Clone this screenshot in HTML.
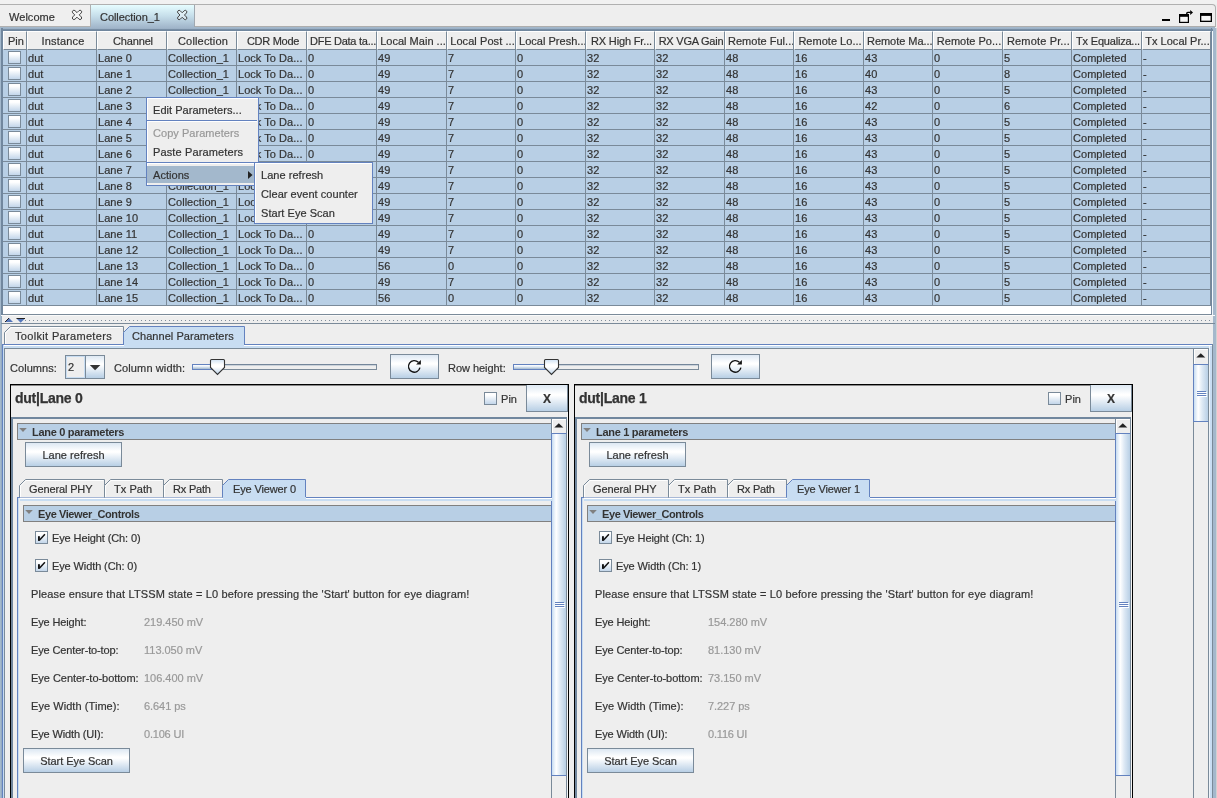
<!DOCTYPE html><html><head><meta charset="utf-8"><title>Collection_1</title><style>
*{box-sizing:border-box;margin:0;padding:0}
html,body{width:1217px;height:798px;overflow:hidden;background:#eeeeee}
body{font-family:"Liberation Sans",sans-serif;font-size:11px;color:#333;position:relative;-webkit-text-stroke:0.2px #333;letter-spacing:0.04px}
#w{position:absolute;left:0;top:0;width:1217px;height:798px;overflow:hidden;will-change:transform}
.a{position:absolute}
.t{position:absolute;white-space:nowrap;line-height:14px;height:14px}
.hd{position:absolute;top:31px;height:19px;letter-spacing:0.02px;background:#eee;border-top:1px solid #fff;border-left:1px solid #fff;border-right:1px solid #7a8a99;border-bottom:1px solid #7a8a99;line-height:18px;white-space:nowrap;overflow:hidden;padding-left:1px}
.row{position:absolute;left:3px;width:1208px;height:16px;background:#b8cfe5;border-bottom:1px solid #7a8a99}
.c{position:absolute;top:0;height:15px;line-height:17px;white-space:nowrap;overflow:hidden;border-right:1px solid #7a8a99;padding-left:1px}
.cb{position:absolute;width:13px;height:13px;border:1px solid #7a8a99;background:linear-gradient(#fff 0%,#fff 20%,#c3d6ea 100%)}
.btn{position:absolute;border:1px solid #7a8a99;background:linear-gradient(#dde8f3 0%,#fff 35%,#fff 40%,#b8cfe5 100%);text-align:center;white-space:nowrap}
.menu{position:absolute;background:#eee;border:1px solid #6382bf;box-shadow:inset 0 1px 0 #fff, inset 1px 0 0 #fff}
.mi{position:absolute;left:1px;white-space:nowrap;line-height:19px;height:19px;padding-left:5px}
.bar{position:absolute;height:17px;background:#b8cfe5;border:1px solid #808080;border-right:none;font-weight:bold;line-height:16px;white-space:nowrap;letter-spacing:-0.3px;-webkit-text-stroke:0}
.dis{color:#999;-webkit-text-stroke:0.2px #999}
</style></head><body><div id="w">
<div class="a" style="left:0;top:0;width:1217px;height:4px;background:#f1f1f1"></div>
<div class="a" style="left:-4px;top:4px;width:1220px;height:23px;border:1px solid #b0b0b0;border-radius:0 4px 0 0;border-bottom:none;border-left:none"></div>
<div class="a" style="left:0;top:5px;width:91px;height:22px;border-right:1px solid #b0b0b0;border-bottom:1px solid #b0b0b0;background:#efefef"></div>
<div class="t" style="left:9px;top:10px">Welcome</div>
<div class="a" style="left:91px;top:5px;width:104px;height:22px;border-right:1px solid #a0a8b0;background:linear-gradient(#e6fdff 0%,#c6deea 50%,#a3b8cc 100%)"></div>
<div class="t" style="left:100px;top:10px;letter-spacing:-0.06px">Collection_1</div>
<div class="a" style="left:195px;top:26px;width:1020px;height:1px;background:#adadad"></div>
<svg class="a" style="left:71px;top:8px" width="13" height="13" viewBox="0 0 13 13"><g transform="translate(6.00,6.90)"><path d="M0 -2.26 L1.97 -4.23 A1.6 1.6 0 0 1 4.23 -1.97 L2.26 0 L4.23 1.97 A1.6 1.6 0 0 1 1.97 4.23 L0 2.26 L-1.97 4.23 A1.6 1.6 0 0 1 -4.23 1.97 L-2.26 0 L-4.23 -1.97 A1.6 1.6 0 0 1 -1.97 -4.23 Z" fill="rgba(255,255,255,0.35)" stroke="#444" stroke-width="1" stroke-linejoin="round"/></g></svg>
<svg class="a" style="left:176px;top:9px" width="13" height="13" viewBox="0 0 13 13"><g transform="translate(6.20,6.00)"><path d="M0 -2.26 L1.97 -4.23 A1.6 1.6 0 0 1 4.23 -1.97 L2.26 0 L4.23 1.97 A1.6 1.6 0 0 1 1.97 4.23 L0 2.26 L-1.97 4.23 A1.6 1.6 0 0 1 -4.23 1.97 L-2.26 0 L-4.23 -1.97 A1.6 1.6 0 0 1 -1.97 -4.23 Z" fill="rgba(255,255,255,0.35)" stroke="#444" stroke-width="1" stroke-linejoin="round"/></g></svg>
<div class="a" style="left:1162px;top:19px;width:8px;height:2px;background:#000"></div>
<svg class="a" style="left:1178px;top:9px" width="16" height="15" viewBox="0 0 16 15"><rect x="1.6" y="5.6" width="8.8" height="7.8" fill="#f6f6f6" stroke="#000" stroke-width="1.2"/><rect x="1" y="5" width="10" height="2.8" fill="#000"/><path d="M8.8 5.5 L8.8 4.4 Q8.8 3.4 9.8 3.4 L12.6 3.4" fill="none" stroke="#000" stroke-width="1.4"/><path d="M12.2 0.9 L15 3.45 L12.2 6 Z" fill="#000"/></svg>
<svg class="a" style="left:1200px;top:13px" width="12" height="9" viewBox="0 0 12 9"><rect x="0.65" y="0.65" width="10.7" height="7.7" fill="#f6f6f6" stroke="#000" stroke-width="1.3"/><rect x="0" y="0" width="12" height="2.9" fill="#000"/></svg>
<div class="a" style="left:0;top:27px;width:1215px;height:4px;background:linear-gradient(#a3b8cc 0,#a0b5ca 35%,#748aa1 65%,#6f859c 100%)"></div>
<div class="a" style="left:0;top:27px;width:1px;height:771px;background:#a3b8cc"></div>
<div class="a" style="left:1px;top:315px;width:1px;height:483px;background:#95abc1"></div>
<div class="a" style="left:1px;top:28px;width:2px;height:287px;background:#71879e"></div>
<div class="a" style="left:1211px;top:28px;width:1px;height:287px;background:#71879e"></div>
<div class="a" style="left:1212px;top:31px;width:1px;height:284px;background:#f4f7fa"></div>
<div class="a" style="left:1213px;top:28px;width:3px;height:770px;background:#a3b8cc"></div>
<div class="a" style="left:1216px;top:28px;width:1px;height:770px;background:#d0d0d0"></div>
<div class="a" style="left:3px;top:31px;width:1208px;height:283px;background:#fff"></div>
<div class="hd" style="left:3px;width:24px;padding-left:4px;">Pin</div>
<div class="hd" style="left:27px;width:70px;text-align:center;padding-left:2px;letter-spacing:0.17px;">Instance</div>
<div class="hd" style="left:97px;width:70px;text-align:center;padding-left:2px;letter-spacing:-0.17px;">Channel</div>
<div class="hd" style="left:167px;width:70px;text-align:center;padding-left:2px;letter-spacing:0.17px;">Collection</div>
<div class="hd" style="left:237px;width:70px;text-align:center;padding-left:2px;letter-spacing:-0.27px;">CDR Mode</div>
<div class="hd" style="left:307px;width:70px;text-align:center;padding-left:2px;letter-spacing:-0.26px;">DFE Data ta...</div>
<div class="hd" style="left:377px;width:70px;text-align:center;padding-left:2px;">Local Main ...</div>
<div class="hd" style="left:447px;width:69px;text-align:center;padding-left:2px;letter-spacing:0.07px;">Local Post ...</div>
<div class="hd" style="left:516px;width:70px;text-align:center;padding-left:2px;">Local Presh...</div>
<div class="hd" style="left:586px;width:69px;text-align:center;padding-left:2px;letter-spacing:-0.15px;">RX High Fr...</div>
<div class="hd" style="left:655px;width:70px;text-align:center;padding-left:2px;letter-spacing:-0.23px;">RX VGA Gain</div>
<div class="hd" style="left:725px;width:69px;text-align:center;padding-left:2px;">Remote Ful...</div>
<div class="hd" style="left:794px;width:70px;text-align:center;padding-left:2px;">Remote Lo...</div>
<div class="hd" style="left:864px;width:69px;text-align:center;padding-left:2px;letter-spacing:-0.04px;">Remote Ma...</div>
<div class="hd" style="left:933px;width:70px;text-align:center;padding-left:2px;">Remote Po...</div>
<div class="hd" style="left:1003px;width:69px;text-align:center;padding-left:2px;letter-spacing:0.16px;">Remote Pr...</div>
<div class="hd" style="left:1072px;width:70px;text-align:center;padding-left:2px;letter-spacing:-0.2px;">Tx Equaliza...</div>
<div class="hd" style="left:1142px;width:69px;text-align:center;padding-left:2px;">Tx Local Pr...</div>
<div class="row" style="top:50px">
<div class="c" style="left:0;width:24px"><div class="cb" style="left:5px;top:1px"></div></div>
<div class="c" style="left:24px;width:70px">dut</div>
<div class="c" style="left:94px;width:70px">Lane 0</div>
<div class="c" style="left:164px;width:70px">Collection_1</div>
<div class="c" style="left:234px;width:70px">Lock To Da...</div>
<div class="c" style="left:304px;width:70px">0</div>
<div class="c" style="left:374px;width:70px">49</div>
<div class="c" style="left:444px;width:69px">7</div>
<div class="c" style="left:513px;width:70px">0</div>
<div class="c" style="left:583px;width:69px">32</div>
<div class="c" style="left:652px;width:70px">32</div>
<div class="c" style="left:722px;width:69px">48</div>
<div class="c" style="left:791px;width:70px">16</div>
<div class="c" style="left:861px;width:69px">43</div>
<div class="c" style="left:930px;width:70px">0</div>
<div class="c" style="left:1000px;width:69px">5</div>
<div class="c" style="left:1069px;width:70px">Completed</div>
<div class="c" style="left:1139px;width:69px">-</div>
</div>
<div class="row" style="top:66px">
<div class="c" style="left:0;width:24px"><div class="cb" style="left:5px;top:1px"></div></div>
<div class="c" style="left:24px;width:70px">dut</div>
<div class="c" style="left:94px;width:70px">Lane 1</div>
<div class="c" style="left:164px;width:70px">Collection_1</div>
<div class="c" style="left:234px;width:70px">Lock To Da...</div>
<div class="c" style="left:304px;width:70px">0</div>
<div class="c" style="left:374px;width:70px">49</div>
<div class="c" style="left:444px;width:69px">7</div>
<div class="c" style="left:513px;width:70px">0</div>
<div class="c" style="left:583px;width:69px">32</div>
<div class="c" style="left:652px;width:70px">32</div>
<div class="c" style="left:722px;width:69px">48</div>
<div class="c" style="left:791px;width:70px">16</div>
<div class="c" style="left:861px;width:69px">40</div>
<div class="c" style="left:930px;width:70px">0</div>
<div class="c" style="left:1000px;width:69px">8</div>
<div class="c" style="left:1069px;width:70px">Completed</div>
<div class="c" style="left:1139px;width:69px">-</div>
</div>
<div class="row" style="top:82px">
<div class="c" style="left:0;width:24px"><div class="cb" style="left:5px;top:1px"></div></div>
<div class="c" style="left:24px;width:70px">dut</div>
<div class="c" style="left:94px;width:70px">Lane 2</div>
<div class="c" style="left:164px;width:70px">Collection_1</div>
<div class="c" style="left:234px;width:70px">Lock To Da...</div>
<div class="c" style="left:304px;width:70px">0</div>
<div class="c" style="left:374px;width:70px">49</div>
<div class="c" style="left:444px;width:69px">7</div>
<div class="c" style="left:513px;width:70px">0</div>
<div class="c" style="left:583px;width:69px">32</div>
<div class="c" style="left:652px;width:70px">32</div>
<div class="c" style="left:722px;width:69px">48</div>
<div class="c" style="left:791px;width:70px">16</div>
<div class="c" style="left:861px;width:69px">43</div>
<div class="c" style="left:930px;width:70px">0</div>
<div class="c" style="left:1000px;width:69px">5</div>
<div class="c" style="left:1069px;width:70px">Completed</div>
<div class="c" style="left:1139px;width:69px">-</div>
</div>
<div class="row" style="top:98px">
<div class="c" style="left:0;width:24px"><div class="cb" style="left:5px;top:1px"></div></div>
<div class="c" style="left:24px;width:70px">dut</div>
<div class="c" style="left:94px;width:70px">Lane 3</div>
<div class="c" style="left:164px;width:70px">Collection_1</div>
<div class="c" style="left:234px;width:70px">Lock To Da...</div>
<div class="c" style="left:304px;width:70px">0</div>
<div class="c" style="left:374px;width:70px">49</div>
<div class="c" style="left:444px;width:69px">7</div>
<div class="c" style="left:513px;width:70px">0</div>
<div class="c" style="left:583px;width:69px">32</div>
<div class="c" style="left:652px;width:70px">32</div>
<div class="c" style="left:722px;width:69px">48</div>
<div class="c" style="left:791px;width:70px">16</div>
<div class="c" style="left:861px;width:69px">42</div>
<div class="c" style="left:930px;width:70px">0</div>
<div class="c" style="left:1000px;width:69px">6</div>
<div class="c" style="left:1069px;width:70px">Completed</div>
<div class="c" style="left:1139px;width:69px">-</div>
</div>
<div class="row" style="top:114px">
<div class="c" style="left:0;width:24px"><div class="cb" style="left:5px;top:1px"></div></div>
<div class="c" style="left:24px;width:70px">dut</div>
<div class="c" style="left:94px;width:70px">Lane 4</div>
<div class="c" style="left:164px;width:70px">Collection_1</div>
<div class="c" style="left:234px;width:70px">Lock To Da...</div>
<div class="c" style="left:304px;width:70px">0</div>
<div class="c" style="left:374px;width:70px">49</div>
<div class="c" style="left:444px;width:69px">7</div>
<div class="c" style="left:513px;width:70px">0</div>
<div class="c" style="left:583px;width:69px">32</div>
<div class="c" style="left:652px;width:70px">32</div>
<div class="c" style="left:722px;width:69px">48</div>
<div class="c" style="left:791px;width:70px">16</div>
<div class="c" style="left:861px;width:69px">43</div>
<div class="c" style="left:930px;width:70px">0</div>
<div class="c" style="left:1000px;width:69px">5</div>
<div class="c" style="left:1069px;width:70px">Completed</div>
<div class="c" style="left:1139px;width:69px">-</div>
</div>
<div class="row" style="top:130px">
<div class="c" style="left:0;width:24px"><div class="cb" style="left:5px;top:1px"></div></div>
<div class="c" style="left:24px;width:70px">dut</div>
<div class="c" style="left:94px;width:70px">Lane 5</div>
<div class="c" style="left:164px;width:70px">Collection_1</div>
<div class="c" style="left:234px;width:70px">Lock To Da...</div>
<div class="c" style="left:304px;width:70px">0</div>
<div class="c" style="left:374px;width:70px">49</div>
<div class="c" style="left:444px;width:69px">7</div>
<div class="c" style="left:513px;width:70px">0</div>
<div class="c" style="left:583px;width:69px">32</div>
<div class="c" style="left:652px;width:70px">32</div>
<div class="c" style="left:722px;width:69px">48</div>
<div class="c" style="left:791px;width:70px">16</div>
<div class="c" style="left:861px;width:69px">43</div>
<div class="c" style="left:930px;width:70px">0</div>
<div class="c" style="left:1000px;width:69px">5</div>
<div class="c" style="left:1069px;width:70px">Completed</div>
<div class="c" style="left:1139px;width:69px">-</div>
</div>
<div class="row" style="top:146px">
<div class="c" style="left:0;width:24px"><div class="cb" style="left:5px;top:1px"></div></div>
<div class="c" style="left:24px;width:70px">dut</div>
<div class="c" style="left:94px;width:70px">Lane 6</div>
<div class="c" style="left:164px;width:70px">Collection_1</div>
<div class="c" style="left:234px;width:70px">Lock To Da...</div>
<div class="c" style="left:304px;width:70px">0</div>
<div class="c" style="left:374px;width:70px">49</div>
<div class="c" style="left:444px;width:69px">7</div>
<div class="c" style="left:513px;width:70px">0</div>
<div class="c" style="left:583px;width:69px">32</div>
<div class="c" style="left:652px;width:70px">32</div>
<div class="c" style="left:722px;width:69px">48</div>
<div class="c" style="left:791px;width:70px">16</div>
<div class="c" style="left:861px;width:69px">43</div>
<div class="c" style="left:930px;width:70px">0</div>
<div class="c" style="left:1000px;width:69px">5</div>
<div class="c" style="left:1069px;width:70px">Completed</div>
<div class="c" style="left:1139px;width:69px">-</div>
</div>
<div class="row" style="top:162px">
<div class="c" style="left:0;width:24px"><div class="cb" style="left:5px;top:1px"></div></div>
<div class="c" style="left:24px;width:70px">dut</div>
<div class="c" style="left:94px;width:70px">Lane 7</div>
<div class="c" style="left:164px;width:70px">Collection_1</div>
<div class="c" style="left:234px;width:70px">Lock To Da...</div>
<div class="c" style="left:304px;width:70px">0</div>
<div class="c" style="left:374px;width:70px">49</div>
<div class="c" style="left:444px;width:69px">7</div>
<div class="c" style="left:513px;width:70px">0</div>
<div class="c" style="left:583px;width:69px">32</div>
<div class="c" style="left:652px;width:70px">32</div>
<div class="c" style="left:722px;width:69px">48</div>
<div class="c" style="left:791px;width:70px">16</div>
<div class="c" style="left:861px;width:69px">43</div>
<div class="c" style="left:930px;width:70px">0</div>
<div class="c" style="left:1000px;width:69px">5</div>
<div class="c" style="left:1069px;width:70px">Completed</div>
<div class="c" style="left:1139px;width:69px">-</div>
</div>
<div class="row" style="top:178px">
<div class="c" style="left:0;width:24px"><div class="cb" style="left:5px;top:1px"></div></div>
<div class="c" style="left:24px;width:70px">dut</div>
<div class="c" style="left:94px;width:70px">Lane 8</div>
<div class="c" style="left:164px;width:70px">Collection_1</div>
<div class="c" style="left:234px;width:70px">Lock To Da...</div>
<div class="c" style="left:304px;width:70px">0</div>
<div class="c" style="left:374px;width:70px">49</div>
<div class="c" style="left:444px;width:69px">7</div>
<div class="c" style="left:513px;width:70px">0</div>
<div class="c" style="left:583px;width:69px">32</div>
<div class="c" style="left:652px;width:70px">32</div>
<div class="c" style="left:722px;width:69px">48</div>
<div class="c" style="left:791px;width:70px">16</div>
<div class="c" style="left:861px;width:69px">43</div>
<div class="c" style="left:930px;width:70px">0</div>
<div class="c" style="left:1000px;width:69px">5</div>
<div class="c" style="left:1069px;width:70px">Completed</div>
<div class="c" style="left:1139px;width:69px">-</div>
</div>
<div class="row" style="top:194px">
<div class="c" style="left:0;width:24px"><div class="cb" style="left:5px;top:1px"></div></div>
<div class="c" style="left:24px;width:70px">dut</div>
<div class="c" style="left:94px;width:70px">Lane 9</div>
<div class="c" style="left:164px;width:70px">Collection_1</div>
<div class="c" style="left:234px;width:70px">Lock To Da...</div>
<div class="c" style="left:304px;width:70px">0</div>
<div class="c" style="left:374px;width:70px">49</div>
<div class="c" style="left:444px;width:69px">7</div>
<div class="c" style="left:513px;width:70px">0</div>
<div class="c" style="left:583px;width:69px">32</div>
<div class="c" style="left:652px;width:70px">32</div>
<div class="c" style="left:722px;width:69px">48</div>
<div class="c" style="left:791px;width:70px">16</div>
<div class="c" style="left:861px;width:69px">43</div>
<div class="c" style="left:930px;width:70px">0</div>
<div class="c" style="left:1000px;width:69px">5</div>
<div class="c" style="left:1069px;width:70px">Completed</div>
<div class="c" style="left:1139px;width:69px">-</div>
</div>
<div class="row" style="top:210px">
<div class="c" style="left:0;width:24px"><div class="cb" style="left:5px;top:1px"></div></div>
<div class="c" style="left:24px;width:70px">dut</div>
<div class="c" style="left:94px;width:70px">Lane 10</div>
<div class="c" style="left:164px;width:70px">Collection_1</div>
<div class="c" style="left:234px;width:70px">Lock To Da...</div>
<div class="c" style="left:304px;width:70px">0</div>
<div class="c" style="left:374px;width:70px">49</div>
<div class="c" style="left:444px;width:69px">7</div>
<div class="c" style="left:513px;width:70px">0</div>
<div class="c" style="left:583px;width:69px">32</div>
<div class="c" style="left:652px;width:70px">32</div>
<div class="c" style="left:722px;width:69px">48</div>
<div class="c" style="left:791px;width:70px">16</div>
<div class="c" style="left:861px;width:69px">43</div>
<div class="c" style="left:930px;width:70px">0</div>
<div class="c" style="left:1000px;width:69px">5</div>
<div class="c" style="left:1069px;width:70px">Completed</div>
<div class="c" style="left:1139px;width:69px">-</div>
</div>
<div class="row" style="top:226px">
<div class="c" style="left:0;width:24px"><div class="cb" style="left:5px;top:1px"></div></div>
<div class="c" style="left:24px;width:70px">dut</div>
<div class="c" style="left:94px;width:70px">Lane 11</div>
<div class="c" style="left:164px;width:70px">Collection_1</div>
<div class="c" style="left:234px;width:70px">Lock To Da...</div>
<div class="c" style="left:304px;width:70px">0</div>
<div class="c" style="left:374px;width:70px">49</div>
<div class="c" style="left:444px;width:69px">7</div>
<div class="c" style="left:513px;width:70px">0</div>
<div class="c" style="left:583px;width:69px">32</div>
<div class="c" style="left:652px;width:70px">32</div>
<div class="c" style="left:722px;width:69px">48</div>
<div class="c" style="left:791px;width:70px">16</div>
<div class="c" style="left:861px;width:69px">43</div>
<div class="c" style="left:930px;width:70px">0</div>
<div class="c" style="left:1000px;width:69px">5</div>
<div class="c" style="left:1069px;width:70px">Completed</div>
<div class="c" style="left:1139px;width:69px">-</div>
</div>
<div class="row" style="top:242px">
<div class="c" style="left:0;width:24px"><div class="cb" style="left:5px;top:1px"></div></div>
<div class="c" style="left:24px;width:70px">dut</div>
<div class="c" style="left:94px;width:70px">Lane 12</div>
<div class="c" style="left:164px;width:70px">Collection_1</div>
<div class="c" style="left:234px;width:70px">Lock To Da...</div>
<div class="c" style="left:304px;width:70px">0</div>
<div class="c" style="left:374px;width:70px">49</div>
<div class="c" style="left:444px;width:69px">7</div>
<div class="c" style="left:513px;width:70px">0</div>
<div class="c" style="left:583px;width:69px">32</div>
<div class="c" style="left:652px;width:70px">32</div>
<div class="c" style="left:722px;width:69px">48</div>
<div class="c" style="left:791px;width:70px">16</div>
<div class="c" style="left:861px;width:69px">43</div>
<div class="c" style="left:930px;width:70px">0</div>
<div class="c" style="left:1000px;width:69px">5</div>
<div class="c" style="left:1069px;width:70px">Completed</div>
<div class="c" style="left:1139px;width:69px">-</div>
</div>
<div class="row" style="top:258px">
<div class="c" style="left:0;width:24px"><div class="cb" style="left:5px;top:1px"></div></div>
<div class="c" style="left:24px;width:70px">dut</div>
<div class="c" style="left:94px;width:70px">Lane 13</div>
<div class="c" style="left:164px;width:70px">Collection_1</div>
<div class="c" style="left:234px;width:70px">Lock To Da...</div>
<div class="c" style="left:304px;width:70px">0</div>
<div class="c" style="left:374px;width:70px">56</div>
<div class="c" style="left:444px;width:69px">0</div>
<div class="c" style="left:513px;width:70px">0</div>
<div class="c" style="left:583px;width:69px">32</div>
<div class="c" style="left:652px;width:70px">32</div>
<div class="c" style="left:722px;width:69px">48</div>
<div class="c" style="left:791px;width:70px">16</div>
<div class="c" style="left:861px;width:69px">43</div>
<div class="c" style="left:930px;width:70px">0</div>
<div class="c" style="left:1000px;width:69px">5</div>
<div class="c" style="left:1069px;width:70px">Completed</div>
<div class="c" style="left:1139px;width:69px">-</div>
</div>
<div class="row" style="top:274px">
<div class="c" style="left:0;width:24px"><div class="cb" style="left:5px;top:1px"></div></div>
<div class="c" style="left:24px;width:70px">dut</div>
<div class="c" style="left:94px;width:70px">Lane 14</div>
<div class="c" style="left:164px;width:70px">Collection_1</div>
<div class="c" style="left:234px;width:70px">Lock To Da...</div>
<div class="c" style="left:304px;width:70px">0</div>
<div class="c" style="left:374px;width:70px">49</div>
<div class="c" style="left:444px;width:69px">7</div>
<div class="c" style="left:513px;width:70px">0</div>
<div class="c" style="left:583px;width:69px">32</div>
<div class="c" style="left:652px;width:70px">32</div>
<div class="c" style="left:722px;width:69px">48</div>
<div class="c" style="left:791px;width:70px">16</div>
<div class="c" style="left:861px;width:69px">43</div>
<div class="c" style="left:930px;width:70px">0</div>
<div class="c" style="left:1000px;width:69px">5</div>
<div class="c" style="left:1069px;width:70px">Completed</div>
<div class="c" style="left:1139px;width:69px">-</div>
</div>
<div class="row" style="top:290px">
<div class="c" style="left:0;width:24px"><div class="cb" style="left:5px;top:1px"></div></div>
<div class="c" style="left:24px;width:70px">dut</div>
<div class="c" style="left:94px;width:70px">Lane 15</div>
<div class="c" style="left:164px;width:70px">Collection_1</div>
<div class="c" style="left:234px;width:70px">Lock To Da...</div>
<div class="c" style="left:304px;width:70px">0</div>
<div class="c" style="left:374px;width:70px">56</div>
<div class="c" style="left:444px;width:69px">0</div>
<div class="c" style="left:513px;width:70px">0</div>
<div class="c" style="left:583px;width:69px">32</div>
<div class="c" style="left:652px;width:70px">32</div>
<div class="c" style="left:722px;width:69px">48</div>
<div class="c" style="left:791px;width:70px">16</div>
<div class="c" style="left:861px;width:69px">43</div>
<div class="c" style="left:930px;width:70px">0</div>
<div class="c" style="left:1000px;width:69px">5</div>
<div class="c" style="left:1069px;width:70px">Completed</div>
<div class="c" style="left:1139px;width:69px">-</div>
</div>
<div class="a" style="left:3px;top:314px;width:1209px;height:1px;background:#7a8a99"></div>
<div class="a" style="left:1px;top:315px;width:1214px;height:1px;background:#fafafa"></div>
<div class="a" style="left:25px;top:320px;width:1187px;height:1px;background-image:repeating-linear-gradient(90deg,#7f8d9b 0 1px,transparent 1px 4px)"></div>
<svg class="a" style="left:4px;top:317px" width="22" height="6" viewBox="0 0 22 6"><path d="M1 5 L5 1 L9 5 Z" fill="#5577bb"/><path d="M1 5 L5 1" stroke="#222" stroke-width="1" fill="none"/><path d="M12.5 1.6 L21 1.6 L16.7 5.8 Z" fill="#5577bb"/><path d="M12.5 1.5 L21 1.5" stroke="#222" stroke-width="1" fill="none"/></svg>
<div class="a" style="left:1px;top:323px;width:1214px;height:1px;background:#7a8a99"></div>
<svg class="a" style="left:3px;top:325px" width="245" height="21" viewBox="0 0 245 21"><path d="M1.5 20 L1.5 7.5 L7.5 1.5 L120.5 1.5 L120.5 20" fill="#eee" stroke="#7a8a99" stroke-width="1"/><path d="M2.5 20 L2.5 8 L8 2.5 L119.5 2.5" fill="none" stroke="#fff" stroke-width="1"/><path d="M120.5 20 L120.5 7.5 L126.5 1.5 L241.5 1.5 L241.5 20 Z" fill="#c8ddf2" stroke="#6382bf" stroke-width="1"/></svg>
<div class="t" style="left:15px;top:329px;letter-spacing:0.33px">Toolkit Parameters</div>
<div class="t" style="left:132px;top:329px;letter-spacing:0.05px">Channel Parameters</div>
<div class="a" style="left:2px;top:344px;width:1211px;height:1px;background:#6382bf"></div>
<div class="a" style="left:3px;top:345px;width:1209px;height:1px;background:#fff"></div>
<div class="a" style="left:3px;top:346px;width:1209px;height:2px;background:#c8ddf2"></div>
<div class="a" style="left:124px;top:344px;width:120px;height:2px;background:#c8ddf2"></div>
<div class="a" style="left:2px;top:344px;width:1px;height:454px;background:#6382bf"></div>
<div class="a" style="left:3px;top:345px;width:1px;height:453px;background:#c8ddf2"></div>
<div class="a" style="left:4px;top:348px;width:1px;height:450px;background:#7a8a99"></div>
<div class="a" style="left:4px;top:348px;width:1205px;height:1px;background:#7a8a99"></div>
<div class="a" style="left:1209px;top:346px;width:1px;height:452px;background:#eef4fa"></div>
<div class="a" style="left:1210px;top:346px;width:2px;height:452px;background:#c8ddf2"></div>
<div class="a" style="left:1212px;top:344px;width:1px;height:454px;background:#7a8a99"></div>
<div class="t" style="left:10px;top:361px">Columns:</div>
<div class="a" style="left:65px;top:355px;width:40px;height:24px;border:1px solid #7a8a99;background:linear-gradient(#dde8f3 0%,#fff 35%,#fff 40%,#b8cfe5 100%)"></div>
<div class="a" style="left:66px;top:356px;width:19px;height:22px;border:1px solid #c8ddf2;background:#eee"></div>
<div class="a" style="left:85px;top:356px;width:1px;height:22px;background:#7a8a99"></div>
<div class="t" style="left:68px;top:360px">2</div>
<svg class="a" style="left:89px;top:364px" width="12" height="7" viewBox="0 0 12 7"><path d="M0.8 1 L11.4 1 L6.1 6.3 Z" fill="#333"/></svg>
<div class="t" style="left:114px;top:361px;letter-spacing:0.12px">Column width:</div>
<div class="t" style="left:448px;top:361px;letter-spacing:-0.04px">Row height:</div>
<div class="a" style="left:192px;top:364px;width:185px;height:6px;border:1px solid #7a8a99;border-top-color:#74869a;background:linear-gradient(#b9c4cf 0,#eee 1.5px,#eee 100%)"></div><div class="a" style="left:192px;top:364px;width:20px;height:6px;border:1px solid #6382bf;border-right:none;background:linear-gradient(#fff,#e4edf7 40%,#a3b8cc)"></div><svg class="a" style="left:209px;top:358px" width="17" height="19" viewBox="0 0 17 19"><defs><linearGradient id="tg209" x1="0" y1="0" x2="0" y2="1"><stop offset="0" stop-color="#cfe1f3"/><stop offset="0.35" stop-color="#fff"/><stop offset="0.5" stop-color="#fff"/><stop offset="1" stop-color="#bcd2e8"/></linearGradient></defs><path d="M1.5 2.5 Q1.5 1.5 2.5 1.5 L14.5 1.5 Q15.5 1.5 15.5 2.5 L15.5 9.5 L8.5 16.5 L1.5 9.5 Z" fill="url(#tg209)" stroke="#333" stroke-width="1.1"/></svg>
<div class="a" style="left:513px;top:364px;width:186px;height:6px;border:1px solid #7a8a99;border-top-color:#74869a;background:linear-gradient(#b9c4cf 0,#eee 1.5px,#eee 100%)"></div><div class="a" style="left:513px;top:364px;width:33px;height:6px;border:1px solid #6382bf;border-right:none;background:linear-gradient(#fff,#e4edf7 40%,#a3b8cc)"></div><svg class="a" style="left:543px;top:358px" width="17" height="19" viewBox="0 0 17 19"><defs><linearGradient id="tg543" x1="0" y1="0" x2="0" y2="1"><stop offset="0" stop-color="#cfe1f3"/><stop offset="0.35" stop-color="#fff"/><stop offset="0.5" stop-color="#fff"/><stop offset="1" stop-color="#bcd2e8"/></linearGradient></defs><path d="M1.5 2.5 Q1.5 1.5 2.5 1.5 L14.5 1.5 Q15.5 1.5 15.5 2.5 L15.5 9.5 L8.5 16.5 L1.5 9.5 Z" fill="url(#tg543)" stroke="#333" stroke-width="1.1"/></svg>
<div class="btn" style="left:390px;top:354px;width:49px;height:25px"></div><svg class="a" style="left:406px;top:358px" width="17" height="17" viewBox="0 0 17 17"><path d="M12.4 4.3 A5.8 5.8 0 1 0 13.95 9.7" fill="none" stroke="#111" stroke-width="1.35"/><path d="M14.9 2 L14.9 6.6 L10.1 6.6 Z" fill="#111"/></svg>
<div class="btn" style="left:711px;top:354px;width:49px;height:25px"></div><svg class="a" style="left:727px;top:358px" width="17" height="17" viewBox="0 0 17 17"><path d="M12.4 4.3 A5.8 5.8 0 1 0 13.95 9.7" fill="none" stroke="#111" stroke-width="1.35"/><path d="M14.9 2 L14.9 6.6 L10.1 6.6 Z" fill="#111"/></svg>
<div class="a" style="left:1193px;top:349px;width:16px;height:449px;background:#eee;border-left:1px solid #7a8a99;border-right:1px solid #7a8a99"></div><div class="a" style="left:1194px;top:349px;width:14px;height:15px;border-top:1px solid #fff;border-left:1px solid #fff;background:#eee"></div><svg class="a" style="left:1196px;top:353px" width="10" height="5" viewBox="0 0 10 5"><path d="M0.3 4.6 L4.8 0.2 L9.3 4.6 Z" fill="#222"/></svg><div class="a" style="left:1193px;top:364px;width:16px;height:58px;border:1px solid #6382bf;border-right-color:#7a8a99;background:linear-gradient(90deg,#c8ddf2 0%,#fff 30%,#dce8f4 60%,#b8cfe5 100%)"></div><div class="a" style="left:1198px;top:392px;width:9px;height:1px;background:#fff"></div><div class="a" style="left:1197px;top:391px;width:9px;height:1px;background:#6382bf"></div><div class="a" style="left:1198px;top:394px;width:9px;height:1px;background:#fff"></div><div class="a" style="left:1197px;top:393px;width:9px;height:1px;background:#6382bf"></div><div class="a" style="left:1198px;top:396px;width:9px;height:1px;background:#fff"></div><div class="a" style="left:1197px;top:395px;width:9px;height:1px;background:#6382bf"></div>
<div class="a" style="left:10px;top:384px;width:559px;height:2px;background:linear-gradient(#000 50%,#8a8a8a 50%)"></div>
<div class="a" style="left:10px;top:384px;width:1px;height:420px;background:#000"></div>
<div class="a" style="left:568px;top:384px;width:1px;height:420px;background:#000"></div>
<div class="a" style="left:567px;top:386px;width:1px;height:420px;background:#f6f6f6"></div>
<div class="t" style="left:15px;top:390px;font-size:14px;font-weight:bold;line-height:16px;height:16px;letter-spacing:-0.25px;-webkit-text-stroke:0.25px #333">dut|Lane 0</div>
<div class="cb" style="left:484px;top:392px"></div>
<div class="t" style="left:501px;top:392px">Pin</div>
<div class="btn" style="left:526px;top:385px;width:42px;height:27px;font-weight:bold;font-size:12px;line-height:25px;border-top:none;padding-top:2px">X</div>
<div class="a" style="left:11px;top:417px;width:556px;height:2px;background:#71879e"></div>
<div class="a" style="left:11px;top:417px;width:2px;height:400px;background:#71879e"></div>
<div class="a" style="left:551px;top:419px;width:16px;height:379px;background:#eee;border-left:1px solid #7a8a99;border-right:1px solid #7a8a99"></div><div class="a" style="left:552px;top:419px;width:14px;height:15px;border-top:1px solid #fff;border-left:1px solid #fff;background:#eee"></div><svg class="a" style="left:554px;top:423px" width="10" height="5" viewBox="0 0 10 5"><path d="M0.3 4.6 L4.8 0.2 L9.3 4.6 Z" fill="#222"/></svg><div class="a" style="left:551px;top:433px;width:16px;height:343px;border:1px solid #6382bf;border-right-color:#7a8a99;background:linear-gradient(90deg,#c8ddf2 0%,#fff 30%,#dce8f4 60%,#b8cfe5 100%)"></div><div class="a" style="left:556px;top:603px;width:9px;height:1px;background:#fff"></div><div class="a" style="left:555px;top:602px;width:9px;height:1px;background:#6382bf"></div><div class="a" style="left:556px;top:605px;width:9px;height:1px;background:#fff"></div><div class="a" style="left:555px;top:604px;width:9px;height:1px;background:#6382bf"></div><div class="a" style="left:556px;top:607px;width:9px;height:1px;background:#fff"></div><div class="a" style="left:555px;top:606px;width:9px;height:1px;background:#6382bf"></div>
<div class="bar" style="left:17px;top:423px;width:534px;padding-left:14px">Lane 0 parameters</div>
<svg class="a" style="left:19px;top:428px" width="9" height="5" viewBox="0 0 9 5"><path d="M0.2 0 L7.8 0 L4 4 Z" fill="#808080"/></svg>
<div class="btn" style="left:25px;top:442px;width:97px;height:25px;line-height:24px">Lane refresh</div>
<svg class="a" style="left:19px;top:478px" width="540" height="22" viewBox="0 0 540 22">
<path d="M0.5 19.5 L532 19.5" stroke="#6382bf" fill="none"/>
<path d="M0.5 19.5 L0.5 7.5 L6.5 1.5 L85.5 1.5 L85.5 19.5" fill="#eee" stroke="#7a8a99"/>
<path d="M1.5 19 L1.5 8 L7.0 2.5 L84.5 2.5" fill="none" stroke="#fff"/>
<path d="M85.5 19.5 L85.5 7.5 L91.5 1.5 L144.5 1.5 L144.5 19.5" fill="#eee" stroke="#7a8a99"/>
<path d="M86.5 19 L86.5 8 L92.0 2.5 L143.5 2.5" fill="none" stroke="#fff"/>
<path d="M144.5 19.5 L144.5 7.5 L150.5 1.5 L203.5 1.5 L203.5 19.5" fill="#eee" stroke="#7a8a99"/>
<path d="M145.5 19 L145.5 8 L151.0 2.5 L202.5 2.5" fill="none" stroke="#fff"/>
<path d="M203.5 21.5 L203.5 7.5 L209.5 1.5 L286.5 1.5 L286.5 21.5 Z" fill="#c8ddf2" stroke="none"/>
<path d="M203.5 19.5 L203.5 7.5 L209.5 1.5 L286.5 1.5 L286.5 19.5" fill="none" stroke="#6382bf"/>
</svg>
<div class="a" style="left:20px;top:498px;width:532px;height:1px;background:#fff"></div>
<div class="a" style="left:20px;top:499px;width:532px;height:2px;background:#c8ddf2"></div>
<div class="a" style="left:223px;top:497px;width:83px;height:3px;background:#c8ddf2"></div>
<div class="a" style="left:17px;top:497px;width:1px;height:303px;background:#6382bf"></div>
<div class="a" style="left:18px;top:498px;width:1px;height:300px;background:#c8ddf2"></div>
<div class="a" style="left:17px;top:497px;width:3px;height:1px;background:#6382bf"></div>
<div class="t" style="left:29px;top:482px;letter-spacing:-0.13px">General PHY</div>
<div class="t" style="left:114px;top:482px">Tx Path</div>
<div class="t" style="left:173px;top:482px;letter-spacing:-0.2px">Rx Path</div>
<div class="t" style="left:233px;top:482px;letter-spacing:-0.14px">Eye Viewer 0</div>
<div class="bar" style="left:23px;top:505px;width:528px;padding-left:14px;letter-spacing:-0.41px">Eye Viewer_Controls</div>
<svg class="a" style="left:25px;top:510px" width="9" height="5" viewBox="0 0 9 5"><path d="M0.2 0 L7.8 0 L4 4 Z" fill="#808080"/></svg>
<div class="cb" style="left:35px;top:531px"></div>
<svg class="a" style="left:35px;top:531px" width="13" height="13" viewBox="0 0 13 13"><rect x="3" y="5.2" width="1.9" height="4.7" fill="#111"/><path d="M4.4 9.3 L9.9 3.3" stroke="#111" stroke-width="1.5" fill="none"/></svg>
<div class="t" style="left:52px;top:531px;letter-spacing:-0.11px">Eye Height (Ch: 0)</div>
<div class="cb" style="left:35px;top:559px"></div>
<svg class="a" style="left:35px;top:559px" width="13" height="13" viewBox="0 0 13 13"><rect x="3" y="5.2" width="1.9" height="4.7" fill="#111"/><path d="M4.4 9.3 L9.9 3.3" stroke="#111" stroke-width="1.5" fill="none"/></svg>
<div class="t" style="left:52px;top:559px;letter-spacing:-0.11px">Eye Width (Ch: 0)</div>
<div class="t" style="left:31px;top:587px;letter-spacing:0.14px">Please ensure that LTSSM state = L0 before pressing the 'Start' button for eye diagram!</div>
<div class="t" style="left:31px;top:615px;letter-spacing:-0.14px">Eye Height:</div>
<div class="t dis" style="left:144px;top:615px;letter-spacing:-0.02px">219.450 mV</div>
<div class="t" style="left:31px;top:643px;letter-spacing:-0.14px">Eye Center-to-top:</div>
<div class="t dis" style="left:144px;top:643px;letter-spacing:-0.02px">113.050 mV</div>
<div class="t" style="left:31px;top:671px;letter-spacing:-0.03px">Eye Center-to-bottom:</div>
<div class="t dis" style="left:144px;top:671px;letter-spacing:-0.02px">106.400 mV</div>
<div class="t" style="left:31px;top:699px;letter-spacing:0.06px">Eye Width (Time):</div>
<div class="t dis" style="left:144px;top:699px;letter-spacing:-0.07px">6.641 ps</div>
<div class="t" style="left:31px;top:727px;letter-spacing:-0.14px">Eye Width (UI):</div>
<div class="t dis" style="left:144px;top:727px;letter-spacing:-0.2px">0.106 UI</div>
<div class="btn" style="left:23px;top:748px;width:107px;height:25px;line-height:24px;letter-spacing:-0.06px">Start Eye Scan</div>
<div class="a" style="left:574px;top:384px;width:559px;height:2px;background:linear-gradient(#000 50%,#8a8a8a 50%)"></div>
<div class="a" style="left:574px;top:384px;width:1px;height:420px;background:#000"></div>
<div class="a" style="left:1132px;top:384px;width:1px;height:420px;background:#000"></div>
<div class="a" style="left:1131px;top:386px;width:1px;height:420px;background:#f6f6f6"></div>
<div class="t" style="left:579px;top:390px;font-size:14px;font-weight:bold;line-height:16px;height:16px;letter-spacing:-0.25px;-webkit-text-stroke:0.25px #333">dut|Lane 1</div>
<div class="cb" style="left:1048px;top:392px"></div>
<div class="t" style="left:1065px;top:392px">Pin</div>
<div class="btn" style="left:1090px;top:385px;width:42px;height:27px;font-weight:bold;font-size:12px;line-height:25px;border-top:none;padding-top:2px">X</div>
<div class="a" style="left:575px;top:417px;width:556px;height:2px;background:#71879e"></div>
<div class="a" style="left:575px;top:417px;width:2px;height:400px;background:#71879e"></div>
<div class="a" style="left:1115px;top:419px;width:16px;height:379px;background:#eee;border-left:1px solid #7a8a99;border-right:1px solid #7a8a99"></div><div class="a" style="left:1116px;top:419px;width:14px;height:15px;border-top:1px solid #fff;border-left:1px solid #fff;background:#eee"></div><svg class="a" style="left:1118px;top:423px" width="10" height="5" viewBox="0 0 10 5"><path d="M0.3 4.6 L4.8 0.2 L9.3 4.6 Z" fill="#222"/></svg><div class="a" style="left:1115px;top:433px;width:16px;height:343px;border:1px solid #6382bf;border-right-color:#7a8a99;background:linear-gradient(90deg,#c8ddf2 0%,#fff 30%,#dce8f4 60%,#b8cfe5 100%)"></div><div class="a" style="left:1120px;top:603px;width:9px;height:1px;background:#fff"></div><div class="a" style="left:1119px;top:602px;width:9px;height:1px;background:#6382bf"></div><div class="a" style="left:1120px;top:605px;width:9px;height:1px;background:#fff"></div><div class="a" style="left:1119px;top:604px;width:9px;height:1px;background:#6382bf"></div><div class="a" style="left:1120px;top:607px;width:9px;height:1px;background:#fff"></div><div class="a" style="left:1119px;top:606px;width:9px;height:1px;background:#6382bf"></div>
<div class="bar" style="left:581px;top:423px;width:534px;padding-left:14px">Lane 1 parameters</div>
<svg class="a" style="left:583px;top:428px" width="9" height="5" viewBox="0 0 9 5"><path d="M0.2 0 L7.8 0 L4 4 Z" fill="#808080"/></svg>
<div class="btn" style="left:589px;top:442px;width:97px;height:25px;line-height:24px">Lane refresh</div>
<svg class="a" style="left:583px;top:478px" width="540" height="22" viewBox="0 0 540 22">
<path d="M0.5 19.5 L532 19.5" stroke="#6382bf" fill="none"/>
<path d="M0.5 19.5 L0.5 7.5 L6.5 1.5 L85.5 1.5 L85.5 19.5" fill="#eee" stroke="#7a8a99"/>
<path d="M1.5 19 L1.5 8 L7.0 2.5 L84.5 2.5" fill="none" stroke="#fff"/>
<path d="M85.5 19.5 L85.5 7.5 L91.5 1.5 L144.5 1.5 L144.5 19.5" fill="#eee" stroke="#7a8a99"/>
<path d="M86.5 19 L86.5 8 L92.0 2.5 L143.5 2.5" fill="none" stroke="#fff"/>
<path d="M144.5 19.5 L144.5 7.5 L150.5 1.5 L203.5 1.5 L203.5 19.5" fill="#eee" stroke="#7a8a99"/>
<path d="M145.5 19 L145.5 8 L151.0 2.5 L202.5 2.5" fill="none" stroke="#fff"/>
<path d="M203.5 21.5 L203.5 7.5 L209.5 1.5 L286.5 1.5 L286.5 21.5 Z" fill="#c8ddf2" stroke="none"/>
<path d="M203.5 19.5 L203.5 7.5 L209.5 1.5 L286.5 1.5 L286.5 19.5" fill="none" stroke="#6382bf"/>
</svg>
<div class="a" style="left:584px;top:498px;width:532px;height:1px;background:#fff"></div>
<div class="a" style="left:584px;top:499px;width:532px;height:2px;background:#c8ddf2"></div>
<div class="a" style="left:787px;top:497px;width:83px;height:3px;background:#c8ddf2"></div>
<div class="a" style="left:581px;top:497px;width:1px;height:303px;background:#6382bf"></div>
<div class="a" style="left:582px;top:498px;width:1px;height:300px;background:#c8ddf2"></div>
<div class="a" style="left:581px;top:497px;width:3px;height:1px;background:#6382bf"></div>
<div class="t" style="left:593px;top:482px;letter-spacing:-0.13px">General PHY</div>
<div class="t" style="left:678px;top:482px">Tx Path</div>
<div class="t" style="left:737px;top:482px;letter-spacing:-0.2px">Rx Path</div>
<div class="t" style="left:797px;top:482px;letter-spacing:-0.14px">Eye Viewer 1</div>
<div class="bar" style="left:587px;top:505px;width:528px;padding-left:14px;letter-spacing:-0.41px">Eye Viewer_Controls</div>
<svg class="a" style="left:589px;top:510px" width="9" height="5" viewBox="0 0 9 5"><path d="M0.2 0 L7.8 0 L4 4 Z" fill="#808080"/></svg>
<div class="cb" style="left:599px;top:531px"></div>
<svg class="a" style="left:599px;top:531px" width="13" height="13" viewBox="0 0 13 13"><rect x="3" y="5.2" width="1.9" height="4.7" fill="#111"/><path d="M4.4 9.3 L9.9 3.3" stroke="#111" stroke-width="1.5" fill="none"/></svg>
<div class="t" style="left:616px;top:531px;letter-spacing:-0.11px">Eye Height (Ch: 1)</div>
<div class="cb" style="left:599px;top:559px"></div>
<svg class="a" style="left:599px;top:559px" width="13" height="13" viewBox="0 0 13 13"><rect x="3" y="5.2" width="1.9" height="4.7" fill="#111"/><path d="M4.4 9.3 L9.9 3.3" stroke="#111" stroke-width="1.5" fill="none"/></svg>
<div class="t" style="left:616px;top:559px;letter-spacing:-0.11px">Eye Width (Ch: 1)</div>
<div class="t" style="left:595px;top:587px;letter-spacing:0.14px">Please ensure that LTSSM state = L0 before pressing the 'Start' button for eye diagram!</div>
<div class="t" style="left:595px;top:615px;letter-spacing:-0.14px">Eye Height:</div>
<div class="t dis" style="left:708px;top:615px;letter-spacing:-0.02px">154.280 mV</div>
<div class="t" style="left:595px;top:643px;letter-spacing:-0.14px">Eye Center-to-top:</div>
<div class="t dis" style="left:708px;top:643px;letter-spacing:-0.02px">81.130 mV</div>
<div class="t" style="left:595px;top:671px;letter-spacing:-0.03px">Eye Center-to-bottom:</div>
<div class="t dis" style="left:708px;top:671px;letter-spacing:-0.02px">73.150 mV</div>
<div class="t" style="left:595px;top:699px;letter-spacing:0.06px">Eye Width (Time):</div>
<div class="t dis" style="left:708px;top:699px;letter-spacing:-0.07px">7.227 ps</div>
<div class="t" style="left:595px;top:727px;letter-spacing:-0.14px">Eye Width (UI):</div>
<div class="t dis" style="left:708px;top:727px;letter-spacing:-0.2px">0.116 UI</div>
<div class="btn" style="left:587px;top:748px;width:107px;height:25px;line-height:24px;letter-spacing:-0.06px">Start Eye Scan</div>
<div class="menu" style="left:146px;top:97px;width:113px;height:89px">
<div class="mi" style="top:3px;width:108px">Edit Parameters...</div>
<div class="a" style="left:0;top:22px;width:110px;height:1px;background:#6382bf"></div><div class="a" style="left:0;top:23px;width:110px;height:1px;background:#fff"></div>
<div class="mi dis" style="top:26px;width:108px">Copy Parameters</div>
<div class="mi" style="top:45px;width:108px;letter-spacing:0.13px">Paste Parameters</div>
<div class="a" style="left:0;top:64px;width:110px;height:1px;background:#6382bf"></div><div class="a" style="left:0;top:65px;width:110px;height:1px;background:#fff"></div>
<div class="mi" style="top:68px;width:108px;left:0;padding-left:6px;background:#a3b8cc;height:17px;line-height:18px">Actions</div>
<svg class="a" style="left:101px;top:73px" width="5" height="8" viewBox="0 0 5 8"><path d="M0 0 L4.5 4 L0 8 Z" fill="#222"/></svg>
</div>
<div class="menu" style="left:254px;top:162px;width:119px;height:62px">
<div class="mi" style="top:3px">Lane refresh</div>
<div class="mi" style="top:22px">Clear event counter</div>
<div class="mi" style="top:41px">Start Eye Scan</div>
</div>
</div></body></html>
